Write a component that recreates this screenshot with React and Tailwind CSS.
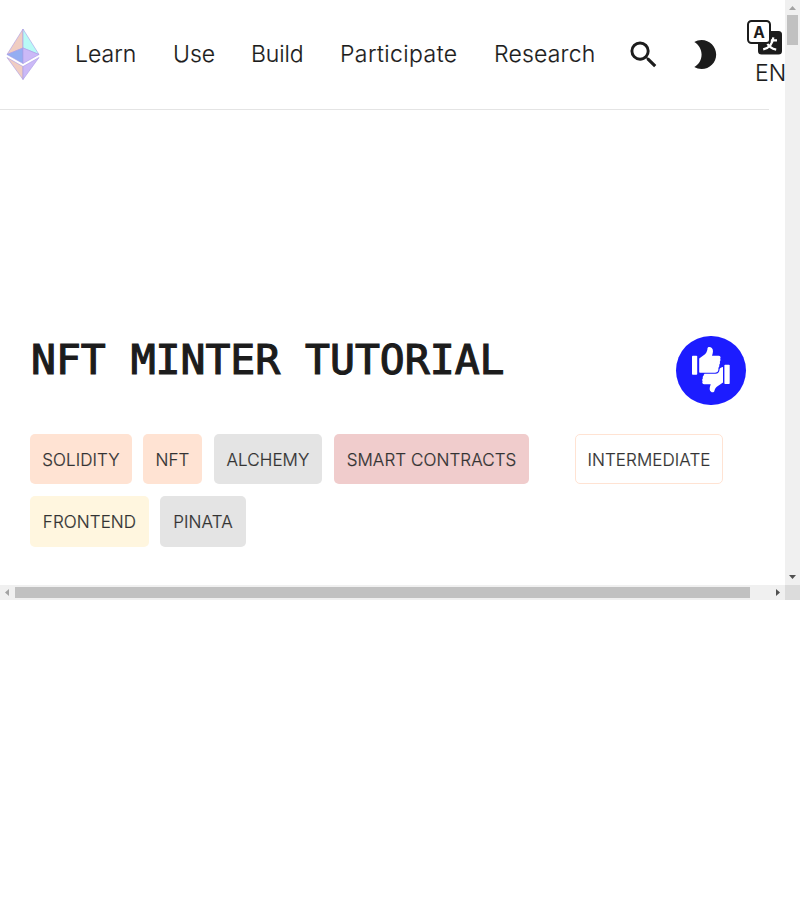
import React from "react";
import { MdSearch, MdBrightness2 } from "react-icons/md";

const links = [
  { label: "Learn", width: "w-[98px]" },
  { label: "Use", width: "w-[78px]" },
  { label: "Build", width: "w-[89px] tracking-[-0.1px]" },
  { label: "Participate", width: "w-[154px] tracking-[0.42px]" },
  { label: "Research", width: "w-[132px] tracking-[0.18px]" },
];

const tags = [
  { label: "SOLIDITY", style: "w-[102px] h-[50px] bg-[#ffe3d3] mr-[11px] pt-[3px]" },
  { label: "NFT", style: "w-[59px] h-[50px] bg-[#ffe3d3] mr-[12px] pt-[3px]" },
  { label: "ALCHEMY", style: "w-[108px] h-[50px] bg-[#e4e4e4] mr-[12px] pt-[3px]" },
  { label: "SMART CONTRACTS", style: "w-[195px] h-[50px] bg-[#f0cccc] pt-[3px]" },
  { label: "FRONTEND", style: "w-[119px] h-[51px] bg-[#fff6df] mr-[11px] pt-[2px]" },
  { label: "PINATA", style: "w-[86px] h-[51px] bg-[#e4e4e4] pt-[2px]" },
];

function EthLogo() {
  return (
    <svg className="mt-[28px] ml-[6px] h-[53px] w-[34px] shrink-0" viewBox="0 0 34 53" stroke="#a99be6" strokeWidth=".6" strokeLinejoin="round">
      <path d="M17 1 1 26.5 17 20Z" fill="#f0cdc2" />
      <path d="M17 1 33 26.5 17 20Z" fill="#b8faf6" />
      <path d="M1 26.5 17 20V35.5Z" fill="#94aef2" />
      <path d="M33 26.5 17 20V35.5Z" fill="#cbb9f7" />
      <path d="M1 29.5 17 38.5V51.5Z" fill="#f0cdc2" />
      <path d="M33 29.5 17 38.5V51.5Z" fill="#cbb9f7" />
    </svg>
  );
}

function TranslateIcon() {
  return (
    <svg className="h-[36px] w-[36px]" viewBox="0 0 36 36">
      <rect x="11" y="11" width="24" height="23.5" rx="3.5" fill="#1c1c1c" />
      <path d="M18 20.3h12M26.3 17.4c-.6 6-3.7 10.6-10.1 12M20 22.8c1.6 3.6 4.6 6 9.2 6.8" fill="none" stroke="#fff" strokeWidth="2.2" />
      <rect x="1" y="1" width="22" height="22" rx="3.5" fill="#fff" stroke="#1c1c1c" strokeWidth="2" />
      <text x="12" y="17.8" textAnchor="middle" fill="#1c1c1c" className="font-['Inter',sans-serif] text-[15.5px] font-bold">A</text>
    </svg>
  );
}

function ThumbsIcon() {
  return (
    <svg className="h-[70px] w-[70px]" viewBox="0 0 70 70" fill="#fff">
      <rect x="16" y="19.8" width="5.2" height="19" rx=".8" />
      <rect x="48.4" y="28.8" width="5.3" height="19.2" rx=".8" />
      <path d="M23.2 22.6 29 18.2C31 16 31.4 14 31.5 12.2c.3-1.6 3-1.6 4.3-.2 1.8 1.9 1.3 4.7.2 7.7h6.6c1.8 0 2.5 1.5 1.6 3.1.5 1.1.3 2.2-.4 3 .4 1.2.1 2.3-.6 3 .3 1.2 0 2.3-.8 3 .5 3.2-.9 4.9-3.2 4.9H24c-.6 0-.8-.3-.8-.8Z" />
      <path d="M47 31v15.4l-6.2 4.4c-2 1.8-2.1 3.2-2.5 4.5-.7 2-4.3 1-4.6-1.8-.2-2 .6-3.4 1-5.2h-6.4c-1.8 0-2.5-1.5-1.7-3-.7-1.1-.5-2.1.3-3-.4-1.1-.1-2.1.8-2.8 0-.8.3-1.4.9-1.7h10.8c2.8 0 4.1-2 4.2-4.9.4-.9 1.8-1.6 3.4-1.9Z" />
    </svg>
  );
}

export default function App() {
  return (
    <div className="h-[900px] w-[800px] overflow-hidden bg-white font-['Inter',sans-serif] text-[#1c1c1c]">
      <div className="flex h-[585px]">
        <div className="w-[785px] overflow-hidden">
          <nav className="flex h-[109px] w-[800px]">
            <EthLogo />
            <div className="mt-[36px] ml-[35px] flex text-[23px] leading-9 font-light [-webkit-text-stroke:0.15px_#1c1c1c]">
              {links.map((link) => (
                <a key={link.label} className={`${link.width} shrink-0 whitespace-nowrap`}>{link.label}</a>
              ))}
            </div>
            <MdSearch className="mt-[36.5px] h-[35.5px] w-[35.5px] shrink-0" />
            <MdBrightness2 className="mt-[37px] ml-[25.5px] h-[35px] w-[35px] shrink-0" />
            <div className="mt-[20px] ml-[25px] w-[50px] shrink-0">
              <TranslateIcon />
              <div className="pl-[8px] text-[23px] leading-[34px] font-light [-webkit-text-stroke:0.15px_#1c1c1c]">EN</div>
            </div>
          </nav>
          <div className="h-px w-[769px] bg-[#e4e4e4]" />
          <div className="mt-[226px] flex h-[98px] justify-between pr-[39px] pl-[31px]">
            <h1 className="font-['DejaVu_Sans_Mono',monospace] text-[41.4px] leading-[48px] font-normal whitespace-nowrap [-webkit-text-stroke:1.2px_#1c1c1c]">NFT MINTER TUTORIAL</h1>
            <button className="h-[69px] w-[70px] rounded-full bg-[#1c1cff]" aria-label="Feedback">
              <ThumbsIcon />
            </button>
          </div>
          <div className="flex pl-[30px] text-[17px] font-light tracking-[0.08px] text-[#333] [-webkit-text-stroke:0.2px_#333]">
            <div className="flex w-[545px] flex-wrap gap-y-[12px]">
              {tags.map((tag) => (
                <div key={tag.label} className={`${tag.style} flex shrink-0 items-center justify-center rounded-[5px] whitespace-nowrap`}>{tag.label}</div>
              ))}
            </div>
            <div className="flex h-[50px] w-[148px] items-center justify-center rounded-[5px] border border-[#ffe3d3] pt-[3px]">INTERMEDIATE</div>
          </div>
        </div>
        <div className="flex w-[15px] flex-col items-center bg-[#f0f0f0]">
          <svg className="h-[15px] w-[15px]" viewBox="0 0 15 15"><path d="M4 10 7.5 6 11 10Z" fill="#a3a3a3" /></svg>
          <div className="h-[30px] w-[11px] bg-[#c1c1c1]" />
          <svg className="mt-auto h-[15px] w-[15px]" viewBox="0 0 15 15"><path d="M4 5 7.5 9 11 5Z" fill="#505050" /></svg>
        </div>
      </div>
      <div className="flex h-[15px] items-center bg-[#f0f0f0]">
        <svg className="h-[15px] w-[15px]" viewBox="0 0 15 15"><path d="M9 4 5 7.5 9 11Z" fill="#a3a3a3" /></svg>
        <div className="h-[11px] w-[735px] bg-[#c1c1c1]" />
        <svg className="ml-[20px] h-[15px] w-[15px]" viewBox="0 0 15 15"><path d="M6 4 10 7.5 6 11Z" fill="#505050" /></svg>
        <div className="h-[15px] w-[15px] bg-[#dcdcdc]" />
      </div>
    </div>
  );
}
